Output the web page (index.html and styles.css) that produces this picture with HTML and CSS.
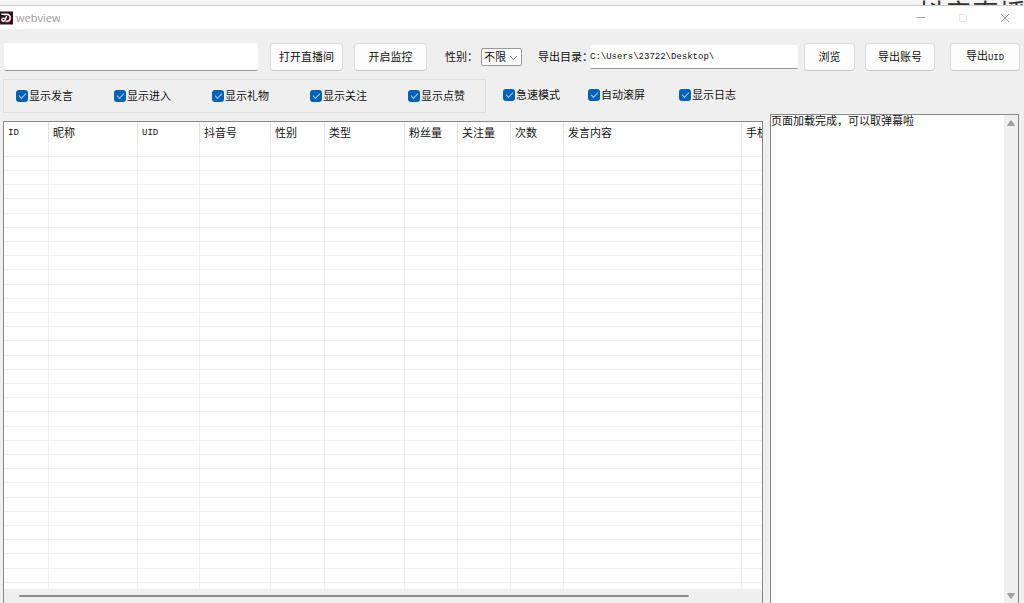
FILE: index.html
```html
<!DOCTYPE html>
<html lang="zh-CN">
<head>
<meta charset="utf-8">
<title>webview</title>
<link rel="stylesheet" href="styles.css">
</head>
<body>
<div class="backdrop">抖音直播</div>
<div class="window">
  <header class="titlebar">
    <svg class="logo" viewBox="0 0 14 14" aria-hidden="true">
      <rect width="14" height="14" fill="#2a1518"/>
      <path d="M4 3.4H8C12.6 3.4 12.4 11 7.6 11H6" fill="none" stroke="#e8506a" stroke-width="1.6"/>
      <path d="M1.5 3H7.5C12 3 11.8 10.4 7.4 10.4H6M7.2 5L5.4 9.2C4.6 11 2 10.8 2 9C2 7.6 3.6 7 5 7.4" fill="none" stroke="#fff" stroke-width="1.5"/>
    </svg>
    <span class="title">webview</span>
    <button class="winbtn" aria-label="最小化"><svg viewBox="0 0 10 10"><path d="M0.5 4.5H9.5" stroke="#a6a6a6"/></svg></button>
    <button class="winbtn" aria-label="最大化" disabled><svg viewBox="0 0 10 10"><rect x="1.5" y="1.5" width="7" height="7" rx="1" fill="none" stroke="#e6e6e6"/></svg></button>
    <button class="winbtn" aria-label="关闭"><svg viewBox="0 0 10 10"><path d="M1 1L9 9M9 1L1 9" stroke="#999"/></svg></button>
  </header>

  <div class="toolbar">
    <input class="field url" type="text" aria-label="直播间地址">
    <button class="btn open">打开直播间</button>
    <button class="btn monitor">开启监控</button>
    <label class="lbl" for="sex">性别：</label>
    <span class="combo">
      <select id="sex"><option>不限</option></select>
      <svg viewBox="0 0 9 6" aria-hidden="true"><path d="M1 1L4.5 4.5L8 1" fill="none" stroke="#777"/></svg>
    </span>
    <label class="lbl dirlbl" for="dir">导出目录：</label>
    <input class="field dir" id="dir" type="text" value="C:\Users\23722\Desktop\">
    <button class="btn browse">浏览</button>
    <button class="btn account">导出账号</button>
    <button class="btn uid">导出<span class="mono">UID</span></button>
  </div>

  <div class="options">
    <div class="group">
      <label class="check"><input type="checkbox" checked>显示发言</label>
      <label class="check"><input type="checkbox" checked>显示进入</label>
      <label class="check"><input type="checkbox" checked>显示礼物</label>
      <label class="check"><input type="checkbox" checked>显示关注</label>
      <label class="check"><input type="checkbox" checked>显示点赞</label>
    </div>
    <div class="extra">
      <label class="check"><input type="checkbox" checked>急速模式</label>
      <label class="check"><input type="checkbox" checked>自动滚屏</label>
      <label class="check"><input type="checkbox" checked>显示日志</label>
    </div>
  </div>

  <main class="panes">
    <section class="list">
      <div class="view">
        <table>
          <colgroup><col class="c45"><col class="c89"><col class="c62"><col class="c71"><col class="c54"><col class="c80"><col class="c53"><col class="c53"><col class="c53"><col class="c178"><col class="c80"></colgroup>
          <thead><tr><th class="mono">ID</th><th>昵称</th><th class="mono">UID</th><th>抖音号</th><th>性别</th><th>类型</th><th>粉丝量</th><th>关注量</th><th>次数</th><th>发言内容</th><th>手机</th></tr></thead>
          <tbody id="rows"></tbody>
        </table>
      </div>
      <div class="hscroll"><div class="thumb"></div></div>
    </section>
    <section class="log">
      <textarea readonly aria-label="日志">页面加载完成，可以取弹幕啦</textarea>
      <div class="vscroll">
        <svg viewBox="0 0 8 6"><path d="M4 0.5L7.5 5.5H0.5Z" fill="#a0a0a0" stroke="#a0a0a0" stroke-linejoin="round"/></svg>
        <svg viewBox="0 0 8 6"><path d="M4 5.5L7.5 0.5H0.5Z" fill="#a0a0a0" stroke="#a0a0a0" stroke-linejoin="round"/></svg>
      </div>
    </section>
  </main>
</div>
<script src="rows.js"></script>
</body>
</html>
```
FILE: rows.js
```js
const body = document.getElementById('rows');
for (let r = 0; r < 32; r++) {
  const row = body.insertRow();
  for (let c = 0; c < 11; c++) row.insertCell();
}
```
FILE: styles.css
```css
* { box-sizing: border-box; }
body {
  margin: 0;
  height: 100vh;
  overflow: hidden;
  display: flex;
  flex-direction: column;
  background: #efefef;
  color: #111;
  font: 11px/14px "Liberation Sans", "Noto Sans CJK SC", sans-serif;
}
button, input, select, textarea { font: inherit; color: inherit; margin: 0; }

.backdrop {
  flex: none;
  height: 5px;
  overflow: hidden;
  padding-left: 918px;
  background: #f4f4f4;
  color: #333;
  font-size: 27px;
  line-height: 30px;
  white-space: nowrap;
}
.window {
  flex: 1;
  min-height: 0;
  display: flex;
  flex-direction: column;
  border-top: 1px solid #cfcfcf;
}
.titlebar {
  flex: none;
  display: flex;
  align-items: center;
  height: 23px;
  padding-right: 5px;
  background: #fff;
}
.logo { width: 13px; height: 14px; }
.title {
  flex: 1;
  padding-left: 3px;
  color: #999;
  font-family: "Open Sans", sans-serif;
  font-size: 11px;
}
.winbtn {
  width: 28px;
  height: 22px;
  margin-left: 14px;
  padding: 0;
  border: 0;
  background: none;
}
.winbtn svg { display: block; width: 10px; height: 10px; margin: 0 auto; }

.toolbar {
  flex: none;
  display: flex;
  align-items: center;
  height: 50px;
  padding: 6px 4px 0 4px;
}
.field {
  border: 0;
  border-bottom: 1px solid #999;
  border-radius: 2px;
  background: #fff;
  outline: 0;
}
.url { width: 254px; height: 28px; }
.dir {
  flex: 1;
  min-width: 0;
  height: 24px;
  padding: 0;
  font-family: "Liberation Mono", monospace;
  font-size: 9px;
}
.mono { font-family: "Liberation Mono", monospace; font-size: 9px; }
.btn {
  flex: none;
  height: 28px;
  padding: 0;
  border: 1px solid #dcdcdc;
  border-bottom-color: #c8c8c8;
  border-radius: 4px;
  background: #fdfdfd;
}
.open { width: 73px; margin-left: 12px; }
.monitor { width: 73px; margin-left: 11px; }
.browse { width: 51px; margin-left: 6px; }
.account { width: 70px; margin-left: 10px; }
.uid { width: 70px; margin-left: 15px; }
.lbl { flex: none; width: 36px; margin-left: 18px; white-space: nowrap; }
.dirlbl { width: 52px; margin-left: 16px; }
.combo { flex: none; position: relative; width: 41px; height: 18px; }
.combo select {
  display: block;
  width: 100%;
  height: 100%;
  padding: 0 0 0 2px;
  appearance: none;
  border: 1px solid #999;
  border-radius: 2px;
  background: #fff;
}
.combo svg { position: absolute; right: 4px; top: 7px; width: 9px; height: 6px; }

.options { flex: none; display: flex; height: 35px; padding-left: 3px; }
.group {
  display: flex;
  align-items: center;
  gap: 39px;
  width: 483px;
  height: 34px;
  padding-left: 12px;
  border: 1px solid #dedede;
}
.extra { display: flex; height: 32px; align-items: center; padding-left: 17px; gap: 26px; }
.extra .check:last-child { margin-left: 6px; }
.check { display: flex; align-items: center; width: 59px; gap: 1px; white-space: nowrap; }
.check input {
  flex: none;
  display: grid;
  place-items: center;
  width: 12px;
  height: 12px;
  appearance: none;
  border-radius: 3px;
  background: #0062b8;
}
.check input:checked::after {
  content: "";
  width: 6px;
  height: 3px;
  margin-bottom: 2px;
  border: solid #a9cdec;
  border-width: 0 0 1px 1px;
  transform: rotate(-45deg);
}

.panes { flex: 1; min-height: 0; display: flex; gap: 7px; padding: 0 5px 0 3px; }
.list {
  flex: 1;
  min-width: 0;
  display: flex;
  flex-direction: column;
  margin-top: 7px;
  border: 1px solid #888;
  border-bottom: 0;
  background: #fff;
}
.view { flex: 1; min-height: 0; overflow: hidden; }
table { width: 791px; table-layout: fixed; border-collapse: separate; border-spacing: 0; }
.c45 { width: 45px; }
.c89 { width: 89px; }
.c62 { width: 62px; }
.c71 { width: 71px; }
.c54 { width: 54px; }
.c80 { width: 80px; }
.c53 { width: 53px; }
.c178 { width: 178px; }
th {
  height: 21px;
  padding: 0 0 0 4px;
  border-right: 1px solid #e2e2e2;
  font-weight: 400;
  text-align: left;
  white-space: nowrap;
}
td { height: 14px; padding: 0; border: solid #f0f0f0; border-width: 0 1px 1px 0; }
tr:nth-child(5n) td { height: 15px; }
.hscroll { flex: none; display: flex; align-items: center; height: 14px; padding: 0 73px 0 15px; background: #efefef; }
.thumb { flex: 1; height: 2px; border-radius: 1px; background: #8c8c8c; }

.log { flex: none; display: flex; width: 249px; border: 1px solid #888; border-bottom: 0; background: #fff; }
.log textarea {
  flex: 1;
  min-width: 0;
  padding: 0;
  border: 0;
  outline: 0;
  resize: none;
  background: #fff;
  line-height: 12px;
}
.vscroll {
  display: flex;
  flex-direction: column;
  align-items: center;
  justify-content: space-between;
  width: 14px;
  padding: 5px 0 4px;
  background: #efefef;
}
.vscroll svg { width: 8px; height: 6px; }
```
